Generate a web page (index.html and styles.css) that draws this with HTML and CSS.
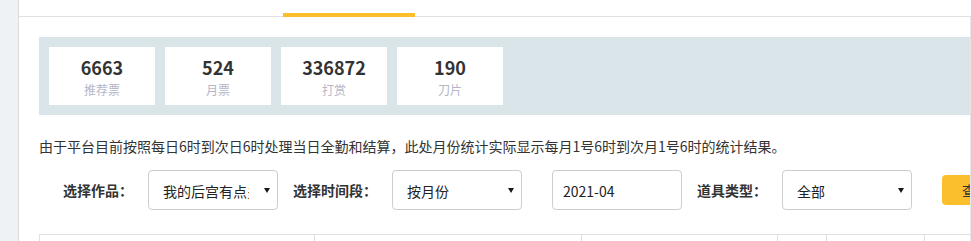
FILE: index.html
```html
<!DOCTYPE html>
<html lang="zh-CN">
<head>
    <meta charset="UTF-8">
    <meta name="viewport" content="width=device-width, initial-scale=1.0">
    <title>作品数据</title>
    <link rel="stylesheet" href="styles.css">
</head>
<body>
    <div class="side"></div>
    <div class="panel">
        <div class="tabs">
            <div class="tab" title="作品数据"></div>
            <div class="tab" title="粉丝数据"></div>
            <div class="tab active" title="道具统计"></div>
        </div>
        <div class="content">
            <div class="stats">
                <div class="stat">
                    <div class="stat-num">6663</div>
                    <div class="stat-label">推荐票</div>
                </div>
                <div class="stat">
                    <div class="stat-num">524</div>
                    <div class="stat-label">月票</div>
                </div>
                <div class="stat">
                    <div class="stat-num">336872</div>
                    <div class="stat-label">打赏</div>
                </div>
                <div class="stat">
                    <div class="stat-num">190</div>
                    <div class="stat-label">刀片</div>
                </div>
            </div>

            <p class="notice">由于平台目前按照每日6时到次日6时处理当日全勤和结算，此处月份统计实际显示每月1号6时到次月1号6时的统计结果。</p>

            <div class="filters">
                <label class="filter-label">选择作品：</label>
                <span class="select-wrap">
                    <select class="select">
                        <option>我的后宫有点多</option>
                    </select>
                </span>
                <label class="filter-label">选择时间段：</label>
                <span class="select-wrap">
                    <select class="select">
                        <option>按月份</option>
                    </select>
                </span>
                <input class="input wide-gap" type="text" value="2021-04">
                <label class="filter-label">道具类型：</label>
                <span class="select-wrap">
                    <select class="select">
                        <option>全部</option>
                    </select>
                </span>
                <button class="btn wide-gap">查询</button>
            </div>

            <table class="data-table">
                <colgroup>
                    <col style="width: 275px">
                    <col style="width: 267px">
                    <col style="width: 196px">
                    <col style="width: 49px">
                    <col style="width: 98px">
                    <col style="width: 120px">
                </colgroup>
                <tr>
                    <th></th>
                    <th></th>
                    <th></th>
                    <th></th>
                    <th></th>
                    <th></th>
                </tr>
            </table>
        </div>
    </div>
</body>
</html>
```
FILE: styles.css
```css
html, body {
    margin: 0;
    padding: 0;
    height: 100%;
}
body {
    display: flex;
    background-color: #eef2f5;
    font-family: "Noto Sans CJK SC", "Microsoft YaHei", sans-serif;
    font-size: 14px;
    color: #333;
    overflow: hidden;
}
.side {
    width: 18px;
    flex-shrink: 0;
    border-right: 1px solid #dcdcdc;
}
.panel {
    width: 952px;
    flex-shrink: 0;
    background-color: white;
}

.tabs {
    display: flex;
    height: 16px;
    border-bottom: 1px solid #e0e0e0;
}
.tab {
    position: relative;
    width: 132px;
}
.tab.active::after {
    content: "";
    position: absolute;
    left: 0;
    right: 0;
    bottom: -1px;
    height: 4px;
    background-color: #fbbf2d;
}

.content {
    padding: 20px 0 0 20px;
    border-right: 1px solid #e6e6e6;
    overflow: hidden;
    height: 300px;
}

.stats {
    display: flex;
    gap: 10px;
    width: 1100px;
    padding: 10px;
    background-color: #dae5ea;
}
.stat {
    width: 106px;
    height: 58px;
    box-sizing: border-box;
    padding-top: 8px;
    background-color: white;
    text-align: center;
}
.stat-num {
    font-size: 18px;
    line-height: 24px;
    font-weight: bold;
    color: #333;
}
.stat-label {
    margin-top: 2px;
    font-size: 12px;
    line-height: 18px;
    color: #b3b6c8;
}

.notice {
    margin: 21px 0 0 0;
    line-height: 20px;
    white-space: nowrap;
}

.filters {
    display: flex;
    align-items: center;
    gap: 15px;
    margin: 14px 0 0 24px;
    width: 1100px;
}
.filter-label {
    font-weight: bold;
    white-space: nowrap;
}
.select-wrap {
    position: relative;
    display: block;
}
.select-wrap::after {
    content: "";
    position: absolute;
    right: 8px;
    top: 18px;
    border-left: 3px solid transparent;
    border-right: 3px solid transparent;
    border-top: 5px solid #1a1a1a;
}
.select, .input {
    display: block;
    width: 130px;
    height: 40px;
    box-sizing: border-box;
    border: 1px solid #cdcdcd;
    border-radius: 4px;
    background-color: white;
    font-family: inherit;
    font-size: 14px;
    color: #222;
}
.select {
    -webkit-appearance: none;
    appearance: none;
    padding: 2px 28px 0 14px;
    overflow: hidden;
}
.input {
    padding: 2px 10px 0 10px;
    outline: none;
}
.wide-gap {
    margin-left: 15px;
}
.btn {
    height: 30px;
    padding: 0 20px;
    border: 0;
    border-radius: 4px;
    background-color: #fbbf2d;
    font-family: inherit;
    font-size: 14px;
    color: #333;
    white-space: nowrap;
}

.data-table {
    width: 1005px;
    margin-top: 24px;
    border-collapse: collapse;
    table-layout: fixed;
}
.data-table th {
    height: 40px;
    border: 1px solid #e0e0e0;
}
```
